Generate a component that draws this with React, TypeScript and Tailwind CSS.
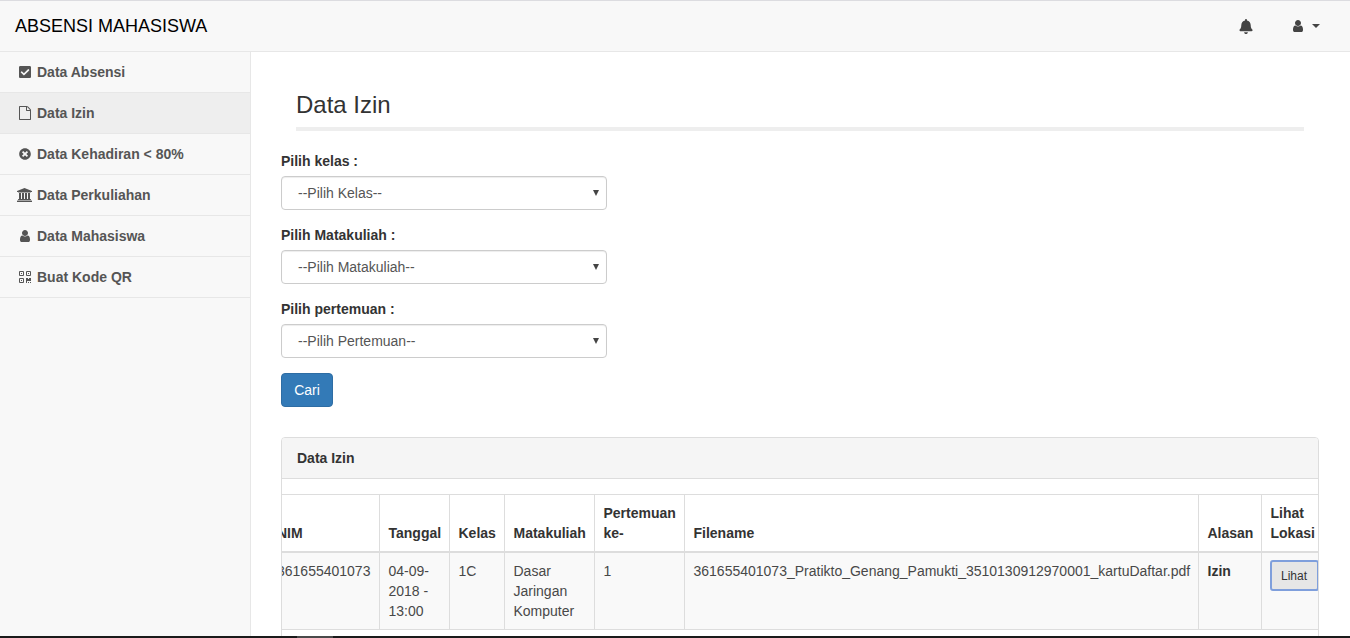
import React from 'react';
import { FaBell, FaCheckSquare, FaTimesCircle } from 'react-icons/fa';

const UserIcon = ({ className }: { className: string }) => (
  <svg viewBox="0 0 1792 1792" fill="currentColor" className={className}>
    <path d="M1536 1399q0 109-62.5 187t-150.5 78h-854q-88 0-150.5-78t-62.5-187q0-85 8.5-160.5t31.5-152 58.5-131 94-89 134.5-34.5q131 128 313 128t313-128q76 0 134.5 34.5t94 89 58.5 131 31.5 152 8.5 160.5zm-256-887q0 159-112.5 271.5t-271.5 112.5-271.5-112.5-112.5-271.5 112.5-271.5 271.5-112.5 271.5 112.5 112.5 271.5z" />
  </svg>
);

const FileIcon = ({ className }: { className: string }) => (
  <svg viewBox="0 0 1792 1792" fill="currentColor" className={className}>
    <path d="M1596 380q28 28 48 76t20 88v1152q0 40-28 68t-68 28h-1344q-40 0-68-28t-28-68v-1600q0-40 28-68t68-28h896q40 0 88 20t76 48zm-444-244v376h376q-10-29-22-41l-313-313q-12-12-41-22zm384 1528v-1024h-416q-40 0-68-28t-28-68v-416h-768v1536h1280z" />
  </svg>
);

const BankIcon = ({ className }: { className: string }) => (
  <svg viewBox="0 0 2048 1792" fill="currentColor" className={className}>
    <path d="M960 0l960 384v128h-128q0 26-20.5 45t-48.5 19h-1526q-28 0-48.5-19t-20.5-45h-128v-128zm-704 640h256v768h128v-768h256v768h128v-768h256v768h128v-768h256v768h59q28 0 48.5 19t20.5 45v64h-1664v-64q0-26 20.5-45t48.5-19h59v-768zm1595 960q28 0 48.5 19t20.5 45v128h-1920v-128q0-26 20.5-45t48.5-19h1782z" />
  </svg>
);

// outlined qr squares, same as the old font-awesome glyph
const QrIcon = ({ className }: { className: string }) => (
  <svg viewBox="0 0 12 12" className={className}>
    <path fill="none" stroke="currentColor" d="M.5.5h4v4h-4zM7.5.5h4v4h-4zM.5 7.5h4v4h-4z" />
    <path fill="currentColor" d="M2 2h1v1H2zM9 2h1v1H9zM2 9h1v1H2zM7 7h2v1h1V7h2v3H8v2H7zM9 11h1v1H9zM11 11h1v1h-1z" />
  </svg>
);

const menu = [
  { label: 'Data Absensi', icon: <FaCheckSquare className="h-[14px] w-[12px]" /> },
  { label: 'Data Izin', icon: <FileIcon className="h-[14px] w-[14px]" />, active: true },
  { label: 'Data Kehadiran < 80%', icon: <FaTimesCircle className="h-[12px] w-[12px]" /> },
  { label: 'Data Perkuliahan', icon: <BankIcon className="h-[14px] w-[16px]" /> },
  { label: 'Data Mahasiswa', icon: <UserIcon className="h-[14px] w-[14px]" /> },
  { label: 'Buat Kode QR', icon: <QrIcon className="h-[12px] w-[12px]" /> },
];

const filters = [
  { label: 'Pilih kelas :', placeholder: '--Pilih Kelas--' },
  { label: 'Pilih Matakuliah :', placeholder: '--Pilih Matakuliah--' },
  { label: 'Pilih pertemuan :', placeholder: '--Pilih Pertemuan--' },
];

const thClass = 'border-r border-[#dddddd] py-2 pl-[9px] pr-[7px] text-left align-bottom font-bold leading-5';
const tdClass = 'border-r border-[#dddddd] py-2 pl-[9px] pr-[7px] align-top leading-5';

export default function App() {
  return (
    <div className="relative h-[638px] w-[1350px] overflow-hidden bg-white font-['Liberation_Sans',Arial,sans-serif] text-[14px] leading-5 text-[#333333]">
      {/* Navbar */}
      <div className="flex h-[52px] items-center justify-between border-t border-b border-t-[#dcdce0] border-b-[#e7e7e7] bg-[#f8f8f8]">
        <span className="ml-[15px] text-[18px] text-[#000000]">ABSENSI MAHASISWA</span>
        <div className="flex items-center text-[#444444]">
          <FaBell className="h-[15px] w-[14px]" />
          <div className="ml-[38px] mr-[30px] flex items-center gap-[7px]">
            <UserIcon className="h-[14px] w-[14px]" />
            <span className="h-0 w-0 border-x-[4px] border-t-[4px] border-x-transparent border-t-[#444444]" />
          </div>
        </div>
      </div>

      <div className="flex h-[584px]">
        {/* Sidebar */}
        <div className="w-[251px] shrink-0 border-r border-[#e7e7e7] bg-[#f8f8f8]">
          {menu.map((item) => (
            <div
              key={item.label}
              className={`flex h-[41px] items-center border-b border-[#e7e7e7] pl-[15px] font-bold text-[#555555] ${item.active ? 'bg-[#eeeeee]' : ''}`}
            >
              <span className="mr-[3px] flex w-[19px] items-center justify-center">{item.icon}</span>
              {item.label}
            </div>
          ))}
        </div>

        {/* Page content */}
        <div className="min-w-0 flex-1 pl-[30px] pr-[31px]">
          <div className="mx-[15px] mt-[40px] border-b-4 border-[#eeeeee] pb-[9px]">
            <h1 className="text-[24px] leading-[26px] font-normal text-[#333333]">Data Izin</h1>
          </div>

          <div className="mt-[20px] flex flex-col gap-[15px]">
            {filters.map((f) => (
              <div key={f.label}>
                <div className="mb-[5px] font-bold">{f.label}</div>
                <div className="relative flex h-[34px] w-[326px] items-center rounded border border-[#cccccc] bg-white pl-4 text-[#555555] shadow-[inset_0_1px_1px_rgba(0,0,0,0.075)]">
                  {f.placeholder}
                  <span className="absolute right-[7px] top-[13px] h-0 w-0 border-x-[3.5px] border-t-[6px] border-x-transparent border-t-[#444444]" />
                </div>
              </div>
            ))}
          </div>

          <button className="mt-[15px] h-[34px] w-[52px] rounded border border-[#2e6da4] bg-[#337ab7] text-white">Cari</button>

          {/* Panel */}
          <div className="mt-[30px] h-[220px] w-[1038px] overflow-hidden rounded-t border border-[#dddddd]">
            <div className="flex h-[41px] items-center border-b border-[#dddddd] bg-[#f5f5f5] pl-[15px] font-bold">Data Izin</div>
            <div className="mt-[15px] overflow-hidden border-t border-[#dddddd]">
              <table className="ml-[-14px] w-[1050px] table-fixed border-collapse">
                <colgroup>
                  <col className="w-[111px]" />
                  <col className="w-[70px]" />
                  <col className="w-[55px]" />
                  <col className="w-[90px]" />
                  <col className="w-[90px]" />
                  <col className="w-[514px]" />
                  <col className="w-[63px]" />
                  <col className="w-[57px]" />
                </colgroup>
                <thead>
                  <tr className="border-b-2 border-[#dddddd]">
                    <th className={thClass}>NIM</th>
                    <th className={thClass}>Tanggal</th>
                    <th className={thClass}>Kelas</th>
                    <th className={thClass}>Matakuliah</th>
                    <th className={thClass}>Pertemuan ke-</th>
                    <th className={thClass}>Filename</th>
                    <th className={thClass}>Alasan</th>
                    <th className={thClass}>Lihat Lokasi</th>
                  </tr>
                </thead>
                <tbody className="text-[#484848]">
                  <tr className="border-b border-[#dddddd] bg-[#f9f9f9]">
                    <td className={tdClass}>361655401073</td>
                    <td className={tdClass}>04-09-2018 - 13:00</td>
                    <td className={tdClass}>1C</td>
                    <td className={tdClass}>Dasar Jaringan Komputer</td>
                    <td className={tdClass}>1</td>
                    <td className={tdClass}>361655401073_Pratikto_Genang_Pamukti_3510130912970001_kartuDaftar.pdf</td>
                    <td className={`${tdClass} font-bold text-[#333333]`}>Izin</td>
                    <td className="pb-2 pl-[8px] pt-[7px] align-top leading-5">
                      <button className="block h-[31px] w-[49px] rounded-[3px] border-2 border-[#7f9fdc] bg-[#e6e6e6] text-[12px] text-[#333333]">Lihat</button>
                    </td>
                  </tr>
                </tbody>
              </table>
            </div>
          </div>
        </div>
      </div>

      {/* Bottom edge of the capture, with a bit of the scrollbar thumb */}
      <div className="absolute bottom-0 left-0 h-[2px] w-full bg-[#1a1a1a]">
        <div className="ml-[297px] h-full w-[36px] bg-[#4a4a4a]" />
      </div>
    </div>
  );
}
